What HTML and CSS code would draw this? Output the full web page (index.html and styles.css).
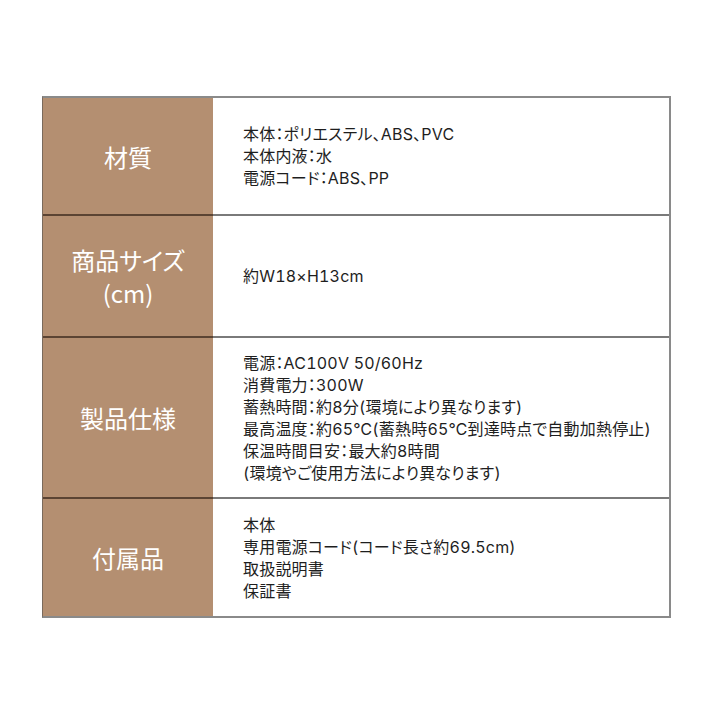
FILE: index.html
```html
<!DOCTYPE html>
<html lang="ja">
<head>
<meta charset="utf-8">
<link rel="stylesheet" href="styles.css">
</head>
<body>
<div class="spec">
  <div class="row r1">
    <div class="label">材質</div>
    <div class="content">
      <p>本体：ポリエステル、ABS、PVC</p>
      <p>本体内液：水</p>
      <p>電源コード：ABS、PP</p>
    </div>
  </div>
  <div class="row r2">
    <div class="label two">商品サイズ<br>(cm)</div>
    <div class="content">
      <p>約W18×H13cm</p>
    </div>
  </div>
  <div class="row r3">
    <div class="label">製品仕様</div>
    <div class="content">
      <p>電源：AC100V 50/60Hz</p>
      <p>消費電力：300W</p>
      <p>蓄熱時間：約8分(環境により異なります)</p>
      <p>最高温度：約65℃(蓄熱時65℃到達時点で自動加熱停止)</p>
      <p>保温時間目安：最大約8時間</p>
      <p>(環境やご使用方法により異なります)</p>
    </div>
  </div>
  <div class="row r4">
    <div class="label">付属品</div>
    <div class="content">
      <p>本体</p>
      <p>専用電源コード(コード長さ約69.5cm)</p>
      <p>取扱説明書</p>
      <p>保証書</p>
    </div>
  </div>
</div>
</body>
</html>
```

FILE: styles.css
```css
html, body {
  margin: 0;
  padding: 0;
  background: #ffffff;
}
body {
  font-family: "Noto Sans CJK JP", "Noto Sans", sans-serif;
  color: #222222;
}
.spec {
  margin: 96px 0 0 42px;
  width: 629px;
  box-sizing: border-box;
  border-top: 2px solid #8a8a8a;
  border-right: 2px solid #8a8a8a;
  border-bottom: 2px solid #8a8a8a;
  border-left: 1px solid #7a6a5c;
}
.row {
  display: grid;
  grid-template-columns: 170px 1fr;
}
.row + .row .label {
  border-top: 2px solid #5b4433;
}
.row + .row .content {
  border-top: 2px solid #7a7a7a;
}
.r1 { height: 116px; }
.r2 { height: 122px; }
.r3 { height: 161px; }
.r4 { height: 119px; }
.label {
  background: #b48f71;
  color: #ffffff;
  font-size: 24px;
  display: flex;
  align-items: center;
  justify-content: center;
  text-align: center;
  font-feature-settings: "palt";
}
.label.two {
  line-height: 33px;
}
.content {
  display: flex;
  flex-direction: column;
  justify-content: center;
  padding-left: 30px;
  font-family: "Inter", "Noto Sans CJK JP", sans-serif;
  font-size: 16px;
  line-height: 22px;
  font-feature-settings: "palt", "tnum";
  letter-spacing: 0.2px;
  color: #1e1e1e;
}
.content p {
  margin: 0;
}
```
